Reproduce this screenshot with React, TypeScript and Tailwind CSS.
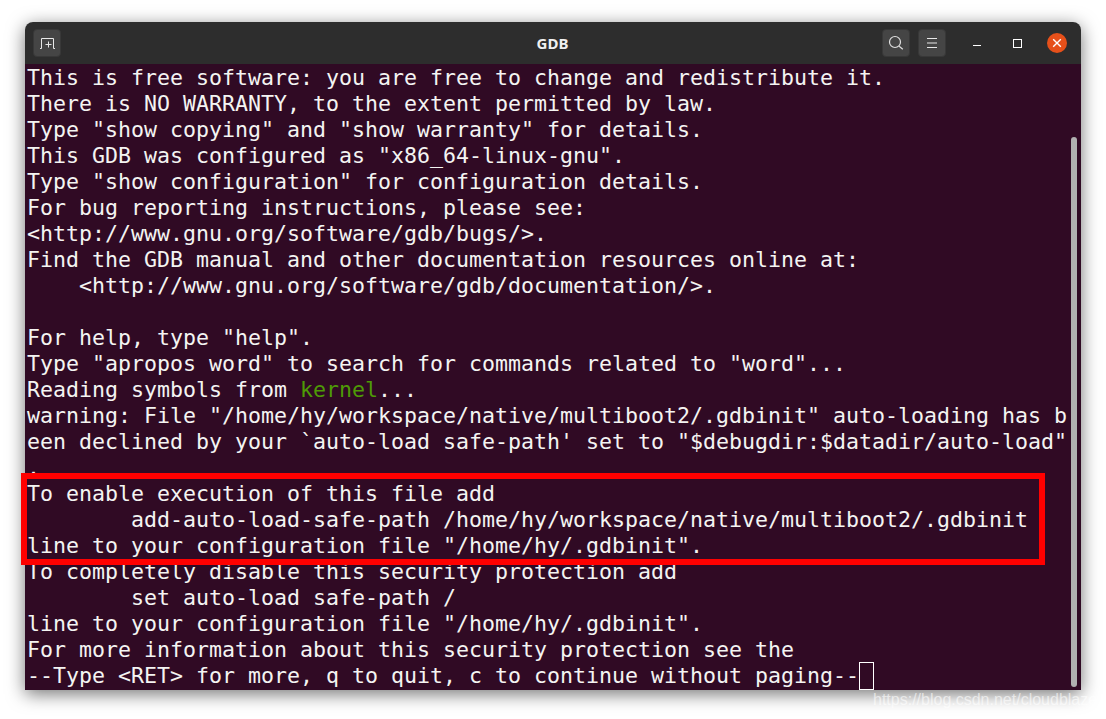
const lines = [
  "This is free software: you are free to change and redistribute it.",
  "There is NO WARRANTY, to the extent permitted by law.",
  'Type "show copying" and "show warranty" for details.',
  'This GDB was configured as "x86_64-linux-gnu".',
  'Type "show configuration" for configuration details.',
  "For bug reporting instructions, please see:",
  "<http://www.gnu.org/software/gdb/bugs/>.",
  "Find the GDB manual and other documentation resources online at:",
  "    <http://www.gnu.org/software/gdb/documentation/>.",
  "",
  'For help, type "help".',
  'Type "apropos word" to search for commands related to "word"...',
];

const linesAfter = [
  'warning: File "/home/hy/workspace/native/multiboot2/.gdbinit" auto-loading has b',
  "een declined by your `auto-load safe-path' set to \"$debugdir:$datadir/auto-load\"",
  ".",
  "To enable execution of this file add",
  "        add-auto-load-safe-path /home/hy/workspace/native/multiboot2/.gdbinit",
  'line to your configuration file "/home/hy/.gdbinit".',
  "To completely disable this security protection add",
  "        set auto-load safe-path /",
  'line to your configuration file "/home/hy/.gdbinit".',
  "For more information about this security protection see the",
];

function HeaderButton({ children }: { children: React.ReactNode }) {
  return (
    <div className="flex h-[28px] w-[28px] items-center justify-center rounded-[4px] border border-[#383838] bg-[#454545]">
      {children}
    </div>
  );
}

export default function App() {
  return (
    <div className="h-[719px] w-[1106px] overflow-hidden bg-white pl-[25px] pt-[22px]">
      <div className="relative flex h-[668px] w-[1056px] flex-col rounded-t-[8px] shadow-[0_4px_18px_rgba(0,0,0,0.55)]">
        {/* Title bar */}
        <div className="flex h-[42px] items-center rounded-t-[8px] bg-[#2d2d2d] pl-[8px] pr-[14px]">
          <div className="flex flex-1">
            <HeaderButton>
              <svg width="16" height="16" viewBox="0 0 16 16" fill="none" stroke="#e8e8e8" strokeWidth="1">
                <path d="M1 13.5h1.5V3.5h12V13.5H16" />
                <path d="M9.5 6.5v6M6.5 9.5h6" />
              </svg>
            </HeaderButton>
          </div>
          <div className="ml-[5px] font-['Noto_Sans',sans-serif] text-[15px] font-bold text-[#f0f0f0]">
            GDB
          </div>
          <div className="flex flex-1 items-center justify-end">
            <HeaderButton>
              <svg width="16" height="16" viewBox="0 0 16 16" fill="none" stroke="#e0e0e0" strokeWidth="1.2">
                <circle cx="7" cy="7" r="5.5" />
                <path d="M11.2 11.2l3.6 3" />
              </svg>
            </HeaderButton>
            <div className="ml-[8px]">
              <HeaderButton>
                <svg width="12" height="12" viewBox="0 0 12 12" fill="none" stroke="#e8e8e8" strokeWidth="1">
                  <path d="M1 1.5h10M1 6h10M1 10.5h10" />
                </svg>
              </HeaderButton>
            </div>
            <div className="ml-[27px] flex h-[28px] items-end pb-[11px]">
              <div className="h-[1px] w-[8px] bg-white" />
            </div>
            <div className="ml-[32px] h-[9px] w-[9px] border border-white" />
            <div className="ml-[25px] flex h-[20px] w-[20px] items-center justify-center rounded-full bg-[#e6501a]">
              <svg width="10" height="10" viewBox="0 0 10 10" stroke="#ffffff" strokeWidth="1.4">
                <path d="M1.2 1.2l7.6 7.6M8.8 1.2l-7.6 7.6" />
              </svg>
            </div>
          </div>
        </div>

        {/* Terminal */}
        <div className="h-[626px] whitespace-pre bg-[#300a24] pl-[2px] pt-[1px] font-['DejaVu_Sans_Mono',monospace] text-[21.6px] leading-[26px] text-[#f4f4f2]">
          {lines.map((line, i) => (
            <div key={i} className="h-[26px]">{line}</div>
          ))}
          <div className="h-[26px]">
            Reading symbols from <span className="text-[#4e9a06]">kernel</span>...
          </div>
          {linesAfter.map((line, i) => (
            <div key={i} className="h-[26px]">{line}</div>
          ))}
          <div className="flex h-[26px] items-start">
            <span>--Type &lt;RET&gt; for more, q to quit, c to continue without paging--</span>
            <span className="mt-[-1px] h-[28px] w-[15px] border border-white" />
          </div>
        </div>

        {/* Scrollbar */}
        <div className="absolute bottom-[3px] right-[4px] top-[115px] w-[6px] rounded-full bg-[#b0b0b0]" />

        {/* Annotation box */}
        <div className="absolute left-[-4px] top-[451px] h-[92px] w-[1024px] border-[6px] border-[#ff0000]" />

        {/* Watermark */}
        <div className="absolute left-[848px] top-[665px] font-['Liberation_Sans',sans-serif] text-[16px] leading-[26px] text-white/60">
          https://blog.csdn.net/cloudblaze
        </div>
      </div>
    </div>
  );
}
